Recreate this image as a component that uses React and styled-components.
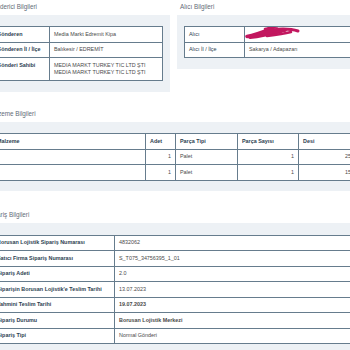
import React from "react";
import styled, { createGlobalStyle } from "styled-components";

const Global = createGlobalStyle`
  html, body { margin: 0; padding: 0; background: #ffffff; overflow: hidden; }
  body { font-family: "Liberation Sans", Arial, sans-serif; }
`;

const Page = styled.div`
  width: 378px;
  margin-left: -15px;
  padding-top: 3px;
`;

const TopRow = styled.div`
  display: flex;
  gap: 7px;
  align-items: flex-start;
`;

const Section = styled.section`
  flex: ${(p) => (p.$width ? `0 0 ${p.$width}px` : "1 1 auto")};
  margin-top: ${(p) => p.$gap || 0}px;
`;

const Title = styled.div`
  font-size: 6.3px;
  line-height: 8px;
  height: 8px;
  color: #5f6b78;
  padding-left: 3px;
  margin-bottom: 4px;
  white-space: nowrap;
`;

const Panel = styled.div`
  background: #edf1f5;
  padding: ${(p) => p.$pt || 11}px 7px ${(p) => p.$pb || 11}px;
`;

const Table = styled.table`
  width: 100%;
  border-collapse: collapse;
  table-layout: fixed;
  background: #ffffff;
  font-size: 5.4px;
  line-height: 7.5px;
`;

const Cell = styled.td`
  border: 1px solid #667c8d;
  padding: 3.5px 4px;
  color: ${(p) => (p.$label ? "#2c3e50" : "#4a4a4a")};
  font-weight: ${(p) => (p.$bold ? 700 : 400)};
  text-align: ${(p) => (p.$right ? "right" : "left")};
  white-space: nowrap;
  overflow: hidden;
  vertical-align: top;
  position: relative;
`;

const Head = styled.th`
  border: 1px solid #667c8d;
  padding: 3.5px 4px;
  color: #2c3e50;
  font-weight: 700;
  text-align: left;
  white-space: nowrap;
  overflow: hidden;
`;

const Redact = styled.svg`
  position: absolute;
  left: 0px;
  top: -2px;
  width: 56px;
  height: 15px;
  overflow: visible;
`;

const Scribble = () => (
  <Redact viewBox="0 0 56 15">
    <g fill="none" stroke="#c2175f" strokeLinecap="round" strokeLinejoin="round">
      <path d="M2 11.5 C 10 10, 18 7, 28 3" strokeWidth="3.5" />
      <path d="M5 12 C 14 11, 24 9, 36 6" strokeWidth="4" />
      <path d="M12 10 C 20 8, 30 6, 40 5" strokeWidth="4" />
      <path d="M16 8 C 22 6, 30 4, 38 4 C 44 4, 50 5, 53 6" strokeWidth="3" />
      <path d="M22 11 C 30 10, 38 9, 46 7" strokeWidth="2.5" />
      <path d="M20 4 C 24 3, 28 2, 32 1.5" strokeWidth="2.5" />
    </g>
  </Redact>
);

const KVTable = ({ labelWidth, rows, boldLabels }) => (
  <Table>
    <colgroup>
      <col style={{ width: labelWidth }} />
      <col />
    </colgroup>
    <tbody>
      {rows.map((r, i) => (
        <tr key={i}>
          <Cell $label $bold={boldLabels}>{r[0]}</Cell>
          <Cell $bold={r[2]}>
            {r.redact ? <Scribble /> : null}
            {Array.isArray(r[1])
              ? r[1].map((l, j) => <div key={j}>{l}</div>)
              : r[1]}
          </Cell>
        </tr>
      ))}
    </tbody>
  </Table>
);

const aliciRows = [
  Object.assign(["Alıcı", ""], { redact: true }),
  ["Alıcı İl / İlçe", "Sakarya / Adapazarı"],
];

export default function App() {
  return (
    <>
      <Global />
      <Page>
        <TopRow>
          <Section $width={185}>
            <Title>Gönderici Bilgileri</Title>
            <Panel>
              <KVTable
                labelWidth={57}
                boldLabels
                rows={[
                  ["Gönderen", "Media Markt Edremit Kipa"],
                  ["Gönderen İl / İlçe", "Balıkesir / EDREMİT"],
                  [
                    "Gönderi Sahibi",
                    ["MEDIA MARKT TURKEY TIC LTD ŞTI", "MEDIA MARKT TURKEY TIC LTD ŞTI"],
                  ],
                ]}
              />
            </Panel>
          </Section>
          <Section>
            <Title>Alıcı Bilgileri</Title>
            <Panel>
              <KVTable labelWidth={60} rows={aliciRows} />
            </Panel>
          </Section>
        </TopRow>

        <Section $gap={18}>
          <Title>Malzeme Bilgileri</Title>
          <Panel $pb={10}>
            <Table>
              <colgroup>
                <col style={{ width: 153 }} />
                <col style={{ width: 30 }} />
                <col style={{ width: 62 }} />
                <col style={{ width: 61 }} />
                <col />
              </colgroup>
              <thead>
                <tr>
                  <Head>Malzeme</Head>
                  <Head>Adet</Head>
                  <Head>Parça Tipi</Head>
                  <Head>Parça Sayısı</Head>
                  <Head>Desi</Head>
                </tr>
              </thead>
              <tbody>
                {[
                  ["1", "Palet", "1", "25"],
                  ["1", "Palet", "1", "15"],
                ].map((r, i) => (
                  <tr key={i}>
                    <Cell></Cell>
                    <Cell $right>{r[0]}</Cell>
                    <Cell>{r[1]}</Cell>
                    <Cell $right>{r[2]}</Cell>
                    <Cell $right>{r[3]}</Cell>
                  </tr>
                ))}
              </tbody>
            </Table>
          </Panel>
        </Section>

        <Section $gap={20}>
          <Title>Sipariş Bilgileri</Title>
          <Panel $pt={12}>
            <KVTable
              labelWidth={122}
              boldLabels
              rows={[
                ["Borusan Lojistik Sipariş Numarası", "4832062"],
                ["Satıcı Firma Sipariş Numarası", "S_T075_34756395_1_01"],
                ["Sipariş Adeti", "2.0"],
                ["Siparişin Borusan Lojistik'e Teslim Tarihi", "13.07.2023"],
                ["Tahmini Teslim Tarihi", "19.07.2023", true],
                ["Sipariş Durumu", "Borusan Lojistik Merkezi", true],
                ["Sipariş Tipi", "Normal Gönderi"],
              ]}
            />
          </Panel>
        </Section>
      </Page>
    </>
  );
}
